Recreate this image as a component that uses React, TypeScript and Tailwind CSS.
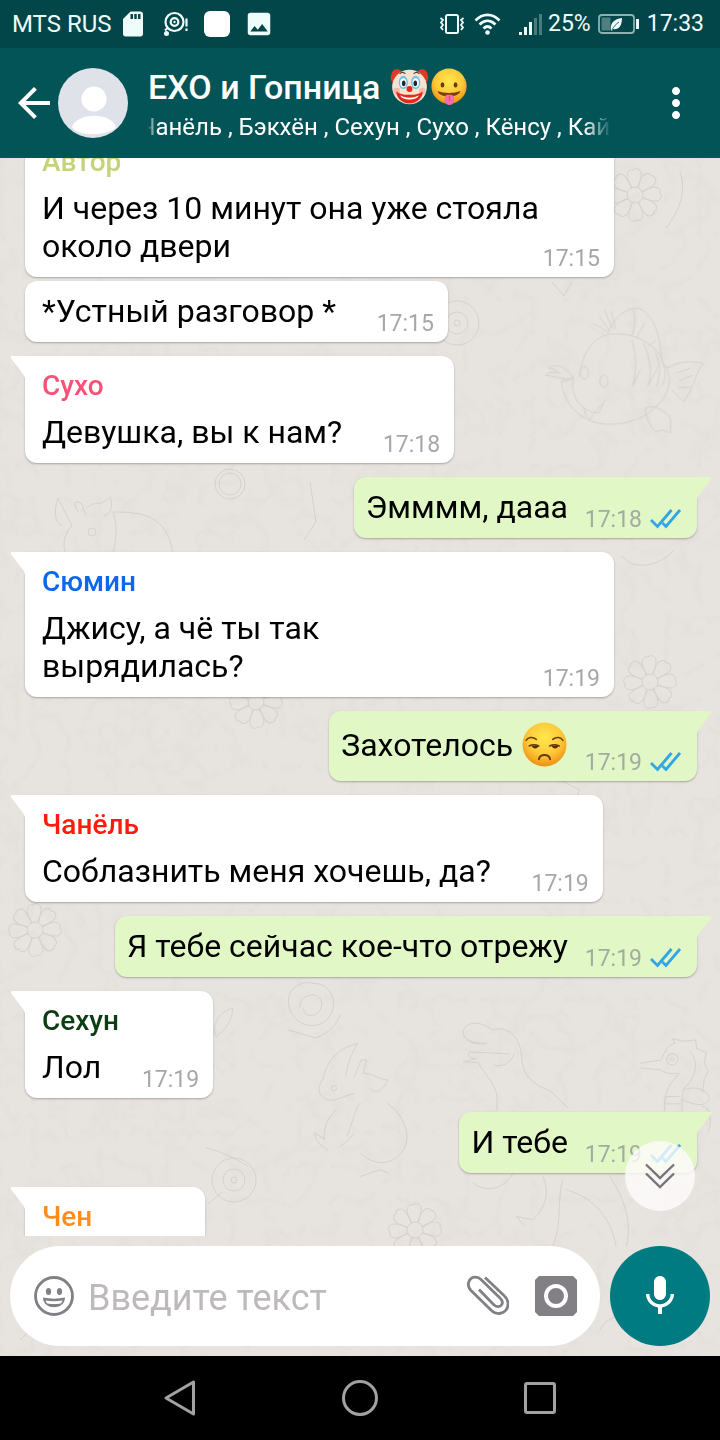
import type { ReactNode } from "react";
import { MdArrowBack, MdImage, MdMic, MdMoreVert, MdSdCard } from "react-icons/md";

type Message = {
  id: number;
  author?: string;
  authorClass?: string;
  text?: ReactNode;
  time?: string;
  own?: boolean;
  grouped?: boolean;
};

const messages: Message[] = [
  {
    id: 1,
    author: "Автор",
    authorClass: "text-[#c5d47c]",
    text: "И через 10 минут она уже стояла около двери",
    time: "17:15",
  },
  { id: 2, text: "*Устный разговор *", time: "17:15", grouped: true },
  {
    id: 3,
    author: "Сухо",
    authorClass: "text-[#fc5079]",
    text: "Девушка, вы к нам?",
    time: "17:18",
  },
  { id: 4, text: "Эмммм, дааа", time: "17:18", own: true },
  {
    id: 5,
    author: "Сюмин",
    authorClass: "text-[#0a67ee]",
    text: "Джису, а чё ты так вырядилась?",
    time: "17:19",
  },
  {
    id: 6,
    text: (
      <>
        Захотелось <UnamusedEmoji />
      </>
    ),
    time: "17:19",
    own: true,
  },
  {
    id: 7,
    author: "Чанёль",
    authorClass: "text-[#fe1b0b]",
    text: "Соблазнить меня хочешь, да?",
    time: "17:19",
  },
  { id: 8, text: "Я тебе сейчас кое-что отрежу", time: "17:19", own: true },
  {
    id: 9,
    author: "Сехун",
    authorClass: "text-[#0d3d12]",
    text: "Лол",
    time: "17:19",
  },
  { id: 10, text: "И тебе", time: "17:19", own: true },
  { id: 11, author: "Чен", authorClass: "text-[#ff8d1c]" },
];

function EmojiFace({ id }: { id: string }) {
  return (
    <>
      <defs>
        <radialGradient id={id} cx="0.5" cy="0.35" r="0.65">
          <stop offset="0" stopColor="#ffe84f" />
          <stop offset="0.6" stopColor="#fdc838" />
          <stop offset="1" stopColor="#ee8f12" />
        </radialGradient>
      </defs>
      <circle cx="22" cy="22" r="21.5" fill={`url(#${id})`} />
    </>
  );
}

function UnamusedEmoji() {
  return (
    <svg
      className="mx-px inline-block h-[47px] w-[45px] align-[-13px]"
      viewBox="0 0 44 46"
      role="img"
      aria-label="Недовольное лицо"
    >
      <EmojiFace id="unamused" />
      <g fill="none" stroke="#6b3a0a" strokeWidth="1.5" strokeLinecap="round">
        <path d="M4 18c2-3 6-4 10-1" />
        <path d="M30 17c4-3 8-2 10 1" />
        <path d="M7 23.500c3-1.500 6-1.500 9.500 0" />
        <path d="M27 23.500c3-1.500 6-1.500 9.500 0" />
        <path d="M16.500 36.500c1-5.500 10-5.500 11 0" strokeWidth="1.900" />
      </g>
      <path d="M9.500 23.500h6.500c-.5 3-5 3.500-6.500 0zM29 23.500h6.500c-.5 3-5 3.500-6.500 0z" fill="#5a2e07" />
    </svg>
  );
}

function TongueEmoji() {
  return (
    <svg className="h-[38px] w-9" viewBox="0 0 44 46" role="img" aria-label="Лицо с языком">
      <EmojiFace id="tongue" />
      <ellipse cx="14" cy="20.500" rx="2.300" ry="3.200" fill="#6b3a0a" />
      <ellipse cx="30" cy="20.500" rx="2.300" ry="3.200" fill="#6b3a0a" />
      <path d="M8 28c8 3 20 3 28 0-2 9-26 9-28 0z" fill="#7d3f0a" />
      <path d="M17 34c2-2 8-2 11 0 1 5 0 11-5.500 11S16 39 17 34z" fill="#f56fa5" />
      <path d="M22.500 34v6" stroke="#d94784" strokeWidth="1.200" />
    </svg>
  );
}

function ClownEmoji() {
  return (
    <svg className="h-[38px] w-[39px]" viewBox="0 0 46 46" role="img" aria-label="Клоун">
      <path d="M1 8C2 1 9 0 13 4L6 18C0 18 1 13 0 12zM45 8C44 1 37 0 33 4l7 14c6 0 5-5 6-6z" fill="#dd3a28" />
      <circle cx="23" cy="23" r="21" fill="#f7e3cf" />
      <circle cx="7.500" cy="28" r="4" fill="#f9b9a8" />
      <circle cx="38.500" cy="28" r="4" fill="#f9b9a8" />
      <ellipse cx="15.500" cy="17.500" rx="5.500" ry="8" fill="#6cc1ee" />
      <ellipse cx="30.500" cy="17.500" rx="5.500" ry="8" fill="#6cc1ee" />
      <ellipse cx="15.500" cy="18" rx="3.800" ry="5.500" fill="#fff" />
      <ellipse cx="30.500" cy="18" rx="3.800" ry="5.500" fill="#fff" />
      <ellipse cx="16" cy="18.500" rx="2.200" ry="3.500" fill="#25272d" />
      <ellipse cx="30" cy="18.500" rx="2.200" ry="3.500" fill="#25272d" />
      <path d="M11 7c2-2 5-2 7 0M28 7c2-2 5-2 7 0" fill="none" stroke="#6a3a20" strokeWidth="1.400" />
      <circle cx="23" cy="25.500" r="3.600" fill="#e5281c" />
      <path d="M7.500 28c4 6 27 6 31 0 2 5-5 15-15.500 15S5.500 33 7.500 28z" fill="#e32a1d" />
      <path d="M11.500 33c6 4 17 4 23 0-3 7-20 7-23 0z" fill="#fff" />
    </svg>
  );
}

function StatusBar() {
  return (
    <div className="flex h-12 shrink-0 items-center justify-between bg-[#02464a] pr-4 pl-3 text-2xl text-[#effcfc]">
      <div className="flex items-center">
        <span>MTS RUS</span>
        <MdSdCard className="ml-[6px] size-[30px]" aria-hidden="true" />
        <svg className="ml-[14px] h-7 w-7" viewBox="0 0 28 28" fill="none" stroke="currentColor" aria-hidden="true">
          <circle cx="12.500" cy="12" r="9" strokeWidth="2.200" />
          <circle cx="12.500" cy="12" r="3.800" strokeWidth="2.200" />
          <circle cx="12.500" cy="12" r="1.200" fill="currentColor" stroke="none" />
          <path d="M3 20.500 6 17.500" strokeWidth="2" />
          <circle cx="4.500" cy="23.500" r="2.500" fill="currentColor" stroke="none" />
          <path d="M24.500 8.500v8M24.500 18.500v2.500" strokeWidth="2.200" />
        </svg>
        <span className="ml-[14px] size-[26px] rounded-md bg-white" />
        <MdImage className="ml-[14px] size-[30px]" aria-hidden="true" />
      </div>
      <div className="flex items-center text-[23px]">
        <svg className="h-6 w-[26px]" viewBox="0 0 26 24" fill="none" stroke="currentColor" strokeWidth="2" aria-hidden="true">
          <rect x="7" y="3" width="12" height="18" rx="1.500" />
          <path d="M1.500 6l2.500 2-2 2.500 2 2.500-2 2.500 2 2.500M24.500 6 22 8l2 2.500-2 2.500 2 2.500-2 2.500" strokeWidth="1.800" />
        </svg>
        <svg className="ml-[9px] h-6 w-[27px]" viewBox="0 0 27 24" fill="none" stroke="currentColor" strokeWidth="2.600" aria-hidden="true">
          <path d="M1.500 8.500c7-7.500 17-7.500 24 0M5.500 12.500c5-5 11-5 16 0M9.500 16.500c2.500-2.500 5.500-2.500 8 0" />
          <circle cx="13.500" cy="20.500" r="2.300" fill="currentColor" stroke="none" />
        </svg>
        <svg className="ml-[18px] h-6 w-6" viewBox="0 0 24 24" fill="currentColor" aria-hidden="true">
          <rect x="0" y="20" width="3" height="3" />
          <rect x="5" y="15" width="3" height="8" />
          <rect x="10" y="10" width="3" height="13" />
          <rect x="15" y="6" width="3" height="17" opacity="0.3" />
          <rect x="20" y="2" width="3" height="21" opacity="0.3" />
        </svg>
        <span className="ml-[5px]">25%</span>
        <svg className="mr-2 ml-[7px] h-6 w-[41px]" viewBox="0 0 41 24" fill="none" aria-hidden="true">
          <rect x="1" y="3" width="35" height="18" rx="3" stroke="#8fb0b1" strokeWidth="1.800" />
          <rect x="3.500" y="5.500" width="9" height="13" fill="#4f7f81" />
          <path d="M13 18c-1-7 3-11 11-12 0 9-4 12-9 11l-1 2z" fill="currentColor" />
          <path d="M14 18c2-4 4-6 7-8" stroke="#35686b" />
          <rect x="38" y="7" width="3" height="10" fill="currentColor" />
        </svg>
        <span>17:33</span>
      </div>
    </div>
  );
}

function ChatHeader() {
  return (
    <header className="flex h-[110px] shrink-0 items-center bg-[#025457] pr-5 pl-[10px] text-white">
      <button type="button" aria-label="Назад">
        <MdArrowBack className="size-12" aria-hidden="true" />
      </button>
      <svg className="size-[70px] shrink-0 rounded-full" viewBox="0 0 70 70" aria-hidden="true">
        <rect width="70" height="70" fill="#dfe2e9" />
        <circle cx="36" cy="31" r="12.500" fill="#fff" />
        <path d="M14 59c5-15 39-15 44 0-6 9-38 10-44 0z" fill="#fff" />
      </svg>
      <div className="ml-5 min-w-0 flex-1 pt-2">
        <h1 className="flex h-10 items-center text-[34px] font-medium whitespace-nowrap">
          ЕХО и Гопница
          <span className="ml-[10px] flex items-center gap-[2px]">
            <ClownEmoji />
            <TongueEmoji />
          </span>
        </h1>
        <p className="overflow-hidden text-2xl leading-10 whitespace-nowrap [mask-image:linear-gradient(to_right,transparent,black_2%,black_94%,transparent)]">
          <span className="-ml-[9px]">Чанёль , Бэкхён , Сехун , Сухо , Кёнсу , Кай</span>
        </p>
      </div>
      <button type="button" aria-label="Меню" className="ml-10">
        <MdMoreVert className="size-12" aria-hidden="true" />
      </button>
    </header>
  );
}

function Flower({ x, y }: { x: number; y: number }) {
  return (
    <g transform={`translate(${x} ${y})`}>
      <circle r="8" />
      {[0, 45, 90, 135, 180, 225, 270, 315].map((angle) => (
        <path key={angle} d="M-3-8C-11-18-8-27-2-25c2-3 9-1 8 5 0 5-2 9-4 13" transform={`rotate(${angle})`} />
      ))}
    </g>
  );
}

function Wheel({ x, y }: { x: number; y: number }) {
  return (
    <g transform={`translate(${x} ${y})`}>
      <circle r="22" />
      <circle r="11" />
      <circle r="3" />
    </g>
  );
}

function Wallpaper() {
  return (
    <svg
      className="absolute inset-0 size-full"
      viewBox="0 158 720 1198"
      preserveAspectRatio="xMidYMin slice"
      aria-hidden="true"
    >
      <defs>
        <filter id="paper" x="0" y="0" width="100%" height="100%">
          <feTurbulence type="turbulence" baseFrequency="0.03" numOctaves="3" seed="4" />
          <feColorMatrix values="0 0 0 0 0.6  0 0 0 0 0.57  0 0 0 0 0.54  -1.6 0 0 0 0.4" />
        </filter>
      </defs>
      <rect y="158" width="720" height="1198" fill="#e7e3df" />
      <rect y="158" width="720" height="1198" filter="url(#paper)" opacity="0.35" />
      <g fill="none" stroke="#bbb6b1" strokeWidth="1" opacity="0.4">
        <Flower x={635} y={195} />
        <Flower x={650} y={682} />
        <Flower x={35} y={930} />
        <Flower x={415} y={1230} />
        <Flower x={256} y={702} />
        <Wheel x={457} y={323} />
        <Wheel x={234} y={1180} />
        <path d="M206 1148c12 2 28 10 42 18M208 1204l14-12" />
        {/* coin */}
        <circle cx="230" cy="484" r="15" />
        <circle cx="230" cy="484" r="11" />
        {/* fish */}
        <g transform="translate(530 160) scale(0.333)" strokeWidth="3">
          <path d="M148 650c10-80 50-130 110-128 70 0 130 40 142 90 30 30 24 90-22 128-40 50-150 70-208 38-40-20-70-60-76-112l36-10c-10 50 20 100 76 104l20-40" />
          <path d="M235 518l-45-28M240 514l-32-44M250 510l-28-62M258 508l-14-54M235 518c20-60 90-100 120-50 28 30 34 70 40 128M310 450c8 30 6 50-4 76M345 490c-10 16-20 30-24 44M380 540l-26 20" />
          <path d="M130 655c-24-40-60-44-74-30 14 0 26 8 34 16-20-8-36-4-44 6 24 0 50 16 84 8M410 626c34-20 70-26 112-14-24 20-24 60-60 114-14-10-24-26-36-36M440 640l40-14M446 664l44-18M446 684l36-2" />
          <path d="M306 540c14 50 14 90 2 140l24-50M340 550c24 50 26 90 14 128l30-56M376 580c16 30 16 60 4 100M400 610c10 30 6 50-4 66" />
          <path d="M346 746c20-14 60 4 76 30v44c-20-10-34-10-44-2-20-20-30-46-32-72zM160 740c4 20 14 34 20 42 10-20 24-36 36-50" />
          <ellipse cx="163" cy="640" rx="12" ry="18" />
          <ellipse cx="222" cy="664" rx="12" ry="18" />
        </g>
        {/* dinosaur, seahorse and dragon */}
        <g transform="translate(210 980) scale(0.333)" strokeWidth="3">
          <path d="M830 190c-50 8-80-16-66-46 20-24 60-14 84 6 50-16 90 30 88 90 10 70 60 80 90 96l50 50M764 166c20 26 40 24 66 24M900 222l-120-6c-10 10-2 20 20 20l-40 10 46 2c20 40 50 60 56 100v44M850 255c30 10 56-10 64-34" />
          <path d="M1000 590c20 50 10 90-30 130l-50-10 20 24M1060 600c-20 60 0 120-30 200M1070 630c70 20 130 70 150 170M1200 590c40 60 70 130 50 210M790 610c40 30 90 20 120-30" />
          <path d="M1292 250l64-10c10-30 20-44 40-50l-8-14 34 8 36-4 4 26 28 12-6 32 12 24-12 24-4 40M1292 264l62 6c20 16 40 10 56 10-30 30-50 60-44 114M1440 214c30 30 20 80-16 110-10 30-6 50-6 70M1420 330c40-14 70 0 80 20 0 30-40 30-80 10M1480 380c20 0 30 40 16 76M1370 350h40M1368 372h44" />
          <circle cx="1388" cy="238" r="17" />
          <circle cx="1388" cy="238" r="5" />
          <path d="M340 296c10-50 40-90 104-106-20 30-30 60-36 98M434 290l20-50 16 0-10 40c30 0 50 20 74 20-10 20-30 50-54 26M340 296c-30 40 0 70 34 64l60-20M532 370c70 50 76 130 30 160-30 30-80 20-110-10M380 388c-30 30-40 60-36 90l-30-18c0 20 20 40 40 50M410 470c20-40 20-70 40-100M450 590l60-20 26 10M390 500c20-10 30-30 44-40" />
          <circle cx="372" cy="325" r="8" />
          <path d="M240 90c-20-60 30-90 70-80 60 0 80 70 40 110-30 30-90 20-110-30zM270 80c0-40 60-50 66-10 0 40-50 50-56 16M236 150l80 24c30-10 60-30 76-70M20 170c-20-30 10-80 48-84-2 40-20 60-48 84" />
        </g>
        {/* rhino */}
        <path d="M58 498l10 20 4 8c-8 8-10 18-6 30M58 498c-4 12-4 24 4 28M78 512c-6-12-2-12 4-8l4 12M86 508c6-4 10-6 14-4l10-6c4 8 0 16-6 18M113 512c28 0 54 2 60 42M113 512c4 12 4 24 0 42" />
        <circle cx="92" cy="532" r="4" />
        <path d="M552 282l12 14 8-14M680 172c8 22-4 44-14 56M560 780l20 10-12 20M622 556c10 14 36 12 52-6M440 560c-6-10-14 0-8 10M310 482l6 40-12 18" />
        <path d="M600 1330c10-22 60-24 80-2M20 1340c20-20 30-14 50 4" />
      </g>
    </svg>
  );
}

function Bubble({ message }: { message: Message }) {
  const { author, authorClass, text, time, own, grouped } = message;

  return (
    <li
      className={`relative flex min-h-[61px] max-w-[589px] min-w-[180px] flex-col rounded-xl pt-[11px] pb-1 shadow-[0_1px_2px_rgba(60,50,40,0.35)] ${
        own ? "self-end rounded-tr-none bg-[#e1f8c6] pr-4 pl-3" : "self-start bg-white pr-[14px] pl-[17px]"
      } ${grouped ? "mt-1" : "mt-[14px] first:mt-0"} ${!own && !grouped ? "rounded-tl-none" : ""}`}
    >
      {grouped ? null : (
        <svg
          className={`absolute top-0 h-[23px] w-4 ${own ? "-right-[15px] -scale-x-100" : "-left-[15px]"} ${
            own ? "fill-[#e1f8c6]" : "fill-white"
          }`}
          viewBox="0 0 16 23"
          aria-hidden="true"
        >
          <path d="M1.500 0H16v23h-1c0-1-.5-3-2-5L1.200 2.500C.5 1.500.5.300 1.500 0z" />
        </svg>
      )}
      {author ? <span className={`mb-2 text-[28px] leading-[38px] font-medium ${authorClass}`}>{author}</span> : null}
      {text ? (
        <>
          {/* the padding on the inner span keeps the last line clear of the time */}
          <p className="pb-2 text-[32px] leading-[38px] text-black">
            <span className={own ? "pr-[113px]" : "pr-[98px]"}>{text}</span>
          </p>
          <span
            className={`-mt-7 flex items-center gap-2 self-end text-[23px] leading-7 ${
              own ? "text-[#a2aba2]" : "text-[#a7a7a9]"
            }`}
          >
            <time>{time}</time>
            {own ? (
              <svg className="h-[22px] w-[31px]" viewBox="0 0 31 22" fill="none" stroke="#2fa6e8" strokeWidth="2.800" role="img" aria-label="Прочитано">
                <path d="M1 11 7.500 17.500 21.500 1M12.500 14 16 17.500 30 1" />
              </svg>
            ) : null}
          </span>
        </>
      ) : null}
    </li>
  );
}

function Composer() {
  return (
    <form className="relative flex shrink-0 gap-[10px] p-[10px]" onSubmit={(event) => event.preventDefault()}>
      <div className="flex h-[100px] min-w-0 flex-1 items-center rounded-full bg-white pr-[23px] pl-6 text-[#808184]">
        <button type="button" aria-label="Эмодзи">
          <svg className="size-10" viewBox="0 0 40 40" fill="none" aria-hidden="true">
            <circle cx="20" cy="20" r="18.500" stroke="currentColor" strokeWidth="2.800" />
            <ellipse cx="14.500" cy="15.500" rx="2.600" ry="3.600" fill="currentColor" />
            <ellipse cx="25.500" cy="15.500" rx="2.600" ry="3.600" fill="currentColor" />
            <path d="M9 21.500c7 1.500 15 1.500 22 0 0 13-22 13-22 0z" fill="currentColor" />
            <path d="M11.500 24.500c6 1 11 1 17 0-.5 1.500-1 2.200-2 3-4 .8-9 .8-13 0-1-.8-1.500-1.500-2-3z" fill="#fff" />
          </svg>
        </button>
        <input
          type="text"
          aria-label="Введите текст"
          placeholder="Введите текст"
          className="ml-[14px] min-w-0 flex-1 pt-1 text-4xl text-black outline-none placeholder:text-[#bebabc]"
        />
        <button type="button" aria-label="Прикрепить">
          <svg className="size-[42px]" viewBox="0 0 42 42" fill="none" stroke="currentColor" strokeWidth="2.800" aria-hidden="true">
            <path d="M18 2.500 37 20.500C42 25 42 31 39 35S29 40 25 36L4 15.500C0 11.500 1 6.500 3.500 4S11 1.500 14 4.500L33 23C36 26 36 28 34.500 30S30 32.500 27 30L12 14.500" />
          </svg>
        </button>
        <button type="button" aria-label="Камера" className="ml-[26px]">
          <svg className="h-10 w-[42px]" viewBox="0 0 42 40" aria-hidden="true">
            <path d="M4 0h34l4 4v32l-4 4H4l-4-4V4z" fill="#828084" />
            <circle cx="21" cy="20" r="10" fill="none" stroke="#fff" strokeWidth="4" />
          </svg>
        </button>
      </div>
      <button
        type="button"
        aria-label="Голосовое сообщение"
        className="flex size-[100px] shrink-0 items-center justify-center rounded-full bg-[#007b82] text-white"
      >
        <MdMic className="size-12" aria-hidden="true" />
      </button>
    </form>
  );
}

function NavigationBar() {
  return (
    <nav className="grid h-[84px] shrink-0 grid-cols-3 bg-black px-[90px] text-[#a3a1a4]">
      <button type="button" aria-label="Назад" className="flex items-center justify-center">
        <svg className="size-10" viewBox="0 0 40 40" fill="none" stroke="currentColor" strokeWidth="3" strokeLinejoin="round" aria-hidden="true">
          <path d="M33.500 4v32L6 20z" />
        </svg>
      </button>
      <button type="button" aria-label="Домой" className="flex items-center justify-center">
        <svg className="size-10" viewBox="0 0 40 40" fill="none" stroke="currentColor" strokeWidth="3" aria-hidden="true">
          <circle cx="20" cy="20" r="16.500" />
        </svg>
      </button>
      <button type="button" aria-label="Недавние" className="flex items-center justify-center">
        <svg className="size-10" viewBox="0 0 40 40" fill="none" stroke="currentColor" strokeWidth="3" aria-hidden="true">
          <rect x="5.500" y="5.500" width="29" height="29" rx="1.500" />
        </svg>
      </button>
    </nav>
  );
}

export default function App() {
  return (
    <div className="flex h-screen flex-col overflow-hidden font-['Roboto',sans-serif]">
      <StatusBar />
      <ChatHeader />
      <main className="relative flex min-h-0 flex-1 flex-col bg-[#e7e3df]">
        <Wallpaper />
        <div className="relative min-h-0 flex-1 overflow-hidden">
          <ul className="-mt-[26px] flex flex-col pr-[23px] pl-[25px]">
            {messages.map((message) => (
              <Bubble key={message.id} message={message} />
            ))}
          </ul>
          <button
            type="button"
            aria-label="Вниз"
            className="absolute right-[25px] bottom-[25px] flex size-[70px] items-center justify-center rounded-full bg-[#fffbfd]/80"
          >
            <svg className="h-[26px] w-[30px]" viewBox="0 0 30 26" fill="none" stroke="#777577" strokeWidth="2.400" aria-hidden="true">
              <path d="M1 1.500 15 15 29 1.500M1 10.500 15 24 29 10.500" />
            </svg>
          </button>
        </div>
        <Composer />
      </main>
      <NavigationBar />
    </div>
  );
}
